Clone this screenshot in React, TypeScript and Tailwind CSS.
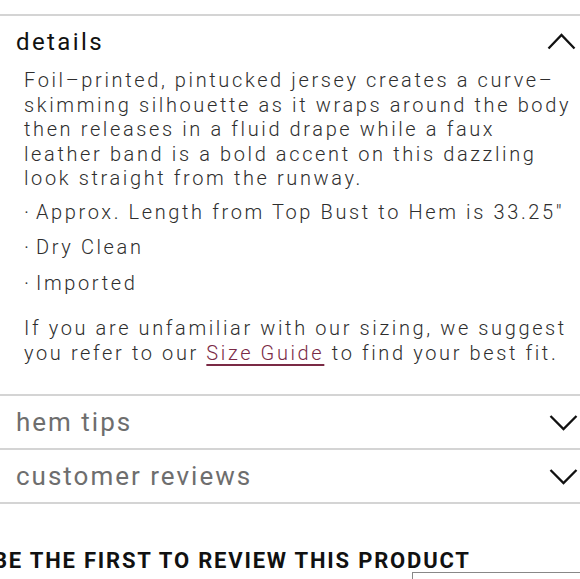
import React from "react";

function ChevronUp() {
  return (
    <svg width="29" height="17" viewBox="0 0 29 17" className="block">
      <polyline points="1.5,15.5 14.5,2 27.5,15.5" fill="none" stroke="#111" strokeWidth="2.3" />
    </svg>
  );
}
function ChevronDown() {
  return (
    <svg width="29" height="17" viewBox="0 0 29 17" className="block">
      <polyline points="1.5,2 14.5,15 27.5,2" fill="none" stroke="#111" strokeWidth="2.3" />
    </svg>
  );
}

function Bullet({ children }: { children: React.ReactNode }) {
  return (
    <li className="flex">
      <span className="inline-block w-[12px] tracking-normal">·</span>
      <span>{children}</span>
    </li>
  );
}

export default function App() {
  const font = { fontFamily: "Roboto, 'Noto Sans', sans-serif" };
  return (
    <div className="w-[580px] h-[579px] overflow-hidden bg-white" style={font}>
      <div className="h-[14px]" />
      <div className="h-[2px] bg-[#d4d4d4]" />
      {/* details */}
      <div className="flex h-[51px] items-center justify-between pl-[16px] pr-[4px]">
        <span className="text-[24px] leading-[30px] tracking-[2.4px] text-[#111]">details</span>
        <ChevronUp />
      </div>
      <div className="pl-[24px] pr-[2px] pt-[1px] text-[20px] font-light text-[#2e2e2e] tracking-[2.62px] whitespace-nowrap">
        <p className="leading-[24.5px]">
          Foil–printed, pintucked jersey creates a curve–
          <br />
          skimming silhouette as it wraps around the body
          <br />
          then releases in a fluid drape while a faux
          <br />
          leather band is a bold accent on this dazzling
          <br />
          look straight from the runway.
        </p>
        <ul className="mt-[4px] leading-[35.5px]">
          <Bullet>Approx. Length from Top Bust to Hem is 33.25"</Bullet>
          <Bullet>Dry Clean</Bullet>
          <Bullet>Imported</Bullet>
        </ul>
        <p className="mt-[15px] leading-[24.5px] pb-[29px]">
          If you are unfamiliar with our sizing, we suggest
          <br />
          you refer to our{" "}
          <a className="text-[#7a2a45] underline underline-offset-[4px] decoration-[1.5px]">Size Guide</a> to find your best fit.
        </p>
      </div>
      <div className="h-[2px] bg-[#d4d4d4]" />
      <div className="flex h-[52px] items-center justify-between pl-[16px] pr-[2px]">
        <span className="text-[26px] leading-[32px] tracking-[2px] text-[#6e6e6e]">hem tips</span>
        <ChevronDown />
      </div>
      <div className="h-[2px] bg-[#d4d4d4]" />
      <div className="flex h-[52px] items-center justify-between pl-[16px] pr-[2px]">
        <span className="text-[26px] leading-[32px] tracking-[2px] text-[#6e6e6e]">customer reviews</span>
        <ChevronDown />
      </div>
      <div className="h-[2px] bg-[#d4d4d4]" />
      <div className="mt-[45px] ml-[-7px] whitespace-nowrap text-[22px] font-bold leading-[24px] tracking-[1.8px] text-[#111]">
        BE THE FIRST TO REVIEW THIS PRODUCT
      </div>
      <div className="ml-[412px] mt-[-1px] h-[40px] border-l-[1.5px] border-t-[1.5px] border-[#888]" />
    </div>
  );
}
